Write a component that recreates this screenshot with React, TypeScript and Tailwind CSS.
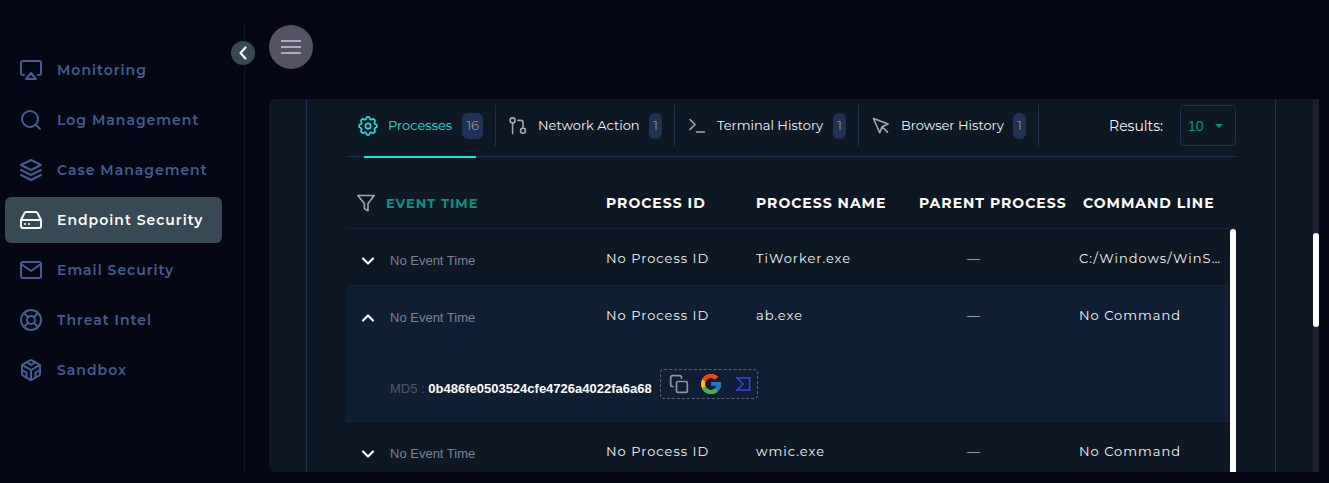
import { useState, type ReactNode } from "react";
import {
  FiAirplay, FiSearch, FiLayers, FiHardDrive, FiMail, FiLifeBuoy, FiCodesandbox, FiCopy,
} from "react-icons/fi";
import { FcGoogle } from "react-icons/fc";
import { ChevronDown, ChevronUp } from "lucide-react";

const strokeProps = {
  fill: "none",
  stroke: "currentColor",
  strokeLinecap: "round" as const,
  strokeLinejoin: "round" as const,
};

function GearIcon() {
  return (
    <svg width="20" height="20" viewBox="0 0 20 20" strokeWidth="1.7" {...strokeProps}>
      <path d="M8.1 2.6 C8.5 .4 11.5 .4 11.9 2.6 C12.1 3.5 12.9 3.9 13.8 3.4 C15.7 2.1 17.9 4.3 16.6 6.2 C16.1 7.1 16.5 7.9 17.4 8.1 C19.6 8.5 19.6 11.5 17.4 11.9 C16.5 12.1 16.1 12.9 16.6 13.8 C17.9 15.7 15.7 17.9 13.8 16.6 C12.9 16.1 12.1 16.5 11.9 17.4 C11.5 19.6 8.5 19.6 8.1 17.4 C7.9 16.5 7.1 16.1 6.2 16.6 C4.3 17.9 2.1 15.7 3.4 13.8 C3.9 12.9 3.5 12.1 2.6 11.9 C.4 11.5 .4 8.5 2.6 8.1 C3.5 7.9 3.9 7.1 3.4 6.2 C2.1 4.3 4.3 2.1 6.2 3.4 C7.1 3.9 7.9 3.5 8.1 2.6 Z" />
      <circle cx="10" cy="10" r="2.7" />
    </svg>
  );
}

function BranchIcon() {
  return (
    <svg width="20" height="20" viewBox="0 0 20 20" strokeWidth="1.6" {...strokeProps}>
      <circle cx="4.6" cy="4.4" r="2.5" />
      <path d="M4.6 7v10.5M10 4.4h3a2 2 0 0 1 2 2v5.8" />
      <circle cx="15" cy="14.8" r="2.5" />
    </svg>
  );
}

function TerminalIcon() {
  return (
    <svg width="20" height="20" viewBox="0 0 20 20" strokeWidth="1.6" {...strokeProps}>
      <path d="M3 3.5l5 5-5 5M9.5 16h8" />
    </svg>
  );
}

function PointerIcon() {
  return (
    <svg width="20" height="20" viewBox="0 0 20 20" strokeWidth="1.6" {...strokeProps}>
      <path d="M2.5 2.5l14.6 5.6-6 2.6-2.4 6zM11.1 10.7l5.4 5.4" />
    </svg>
  );
}

function FunnelIcon() {
  return (
    <svg width="20" height="20" viewBox="0 0 20 20" strokeWidth="1.6" {...strokeProps}>
      <path d="M1.8 2.5h16.4L12 10.4v7.4l-3.6-2.2v-5.2z" />
    </svg>
  );
}

function VirusTotalIcon() {
  return (
    <svg width="16" height="16" viewBox="0 0 16 16" fill="none" stroke="currentColor" strokeWidth="1.7">
      <path d="M2 1.8h12.6v12.4H2L8 8z" />
    </svg>
  );
}

const navItems = [
  { label: "Monitoring", Icon: FiAirplay },
  { label: "Log Management", Icon: FiSearch },
  { label: "Case Management", Icon: FiLayers },
  { label: "Endpoint Security", Icon: FiHardDrive, active: true },
  { label: "Email Security", Icon: FiMail },
  { label: "Threat Intel", Icon: FiLifeBuoy },
  { label: "Sandbox", Icon: FiCodesandbox },
];

function Sidebar() {
  return (
    <aside className="relative mt-[25px] mb-[11px] w-[245px] shrink-0 border-r border-[#0f1a26] pt-[22px] pr-[22px] pl-[5px]">
      <nav className="flex flex-col gap-1">
        {navItems.map(({ label, Icon, active }) => (
          <a
            key={label}
            href="#"
            className={`flex h-[46px] items-center gap-3.5 rounded-md px-3.5 text-sm font-semibold tracking-[1px] whitespace-nowrap ${
              active ? "bg-[#374955] text-white" : "text-[#465d91]"
            }`}
          >
            <Icon size={24} className="shrink-0" />
            {label}
          </a>
        ))}
      </nav>
      <button
        aria-label="Collapse sidebar"
        className="absolute top-4 -right-[11px] flex size-6 items-center justify-center rounded-full bg-[#374955] text-white"
      >
        <svg width="10" height="16" viewBox="0 0 10 16" strokeWidth="2.2" {...strokeProps}>
          <path d="M7.5 2.5L2.5 8l5 5.5" />
        </svg>
      </button>
    </aside>
  );
}

const tabs: { label: string; count: number; icon: ReactNode; width: string }[] = [
  { label: "Processes", count: 16, icon: <GearIcon />, width: "w-[150px]" },
  { label: "Network Action", count: 1, icon: <BranchIcon />, width: "w-[179px]" },
  { label: "Terminal History", count: 1, icon: <TerminalIcon />, width: "w-[184px]" },
  { label: "Browser History", count: 1, icon: <PointerIcon />, width: "w-[180px]" },
];

function TabBar() {
  return (
    <div className="relative flex justify-between border-b border-[#1d3050] pt-1.5 pb-2.5">
      <div role="tablist" className="flex">
        {tabs.map((tab, i) => (
          <button
            key={tab.label}
            role="tab"
            aria-selected={i === 0}
            className={`flex h-[41px] items-center border-r border-[#1d3050] px-3 text-[13px] whitespace-nowrap ${tab.width} ${
              i === 0 ? "text-[#1ae5d8]" : "text-[#f4f5f7]"
            }`}
          >
            <span className={`mr-2.5 shrink-0 ${i === 0 ? "" : "text-[#a3a8ba]"}`}>{tab.icon}</span>
            {tab.label}
            <span className="ml-auto flex h-[26px] items-center rounded-md bg-[#203355] px-1 text-[#8d919b]">
              {tab.count}
            </span>
          </button>
        ))}
      </div>
      <div className="flex items-center gap-[17px] text-sm text-[#f4f5f7]">
        <label htmlFor="results">Results:</label>
        <div className="relative">
          <select
            id="results"
            className="h-[41px] w-14 appearance-none rounded border border-[#1d3050] bg-transparent pl-[7px] font-['Liberation_Sans',sans-serif] text-sm text-[#0b9384]"
          >
            <option>10</option>
            <option>25</option>
          </select>
          <span className="pointer-events-none absolute top-[19px] right-[13px] border-x-4 border-t-4 border-x-transparent border-t-[#0b9384]" />
        </div>
      </div>
      <span className="absolute -bottom-0.5 left-[18px] h-0.5 w-28 bg-[#12e8dc]" />
    </div>
  );
}

const rows = [
  { name: "TiWorker.exe", command: "C:/Windows/WinS…" },
  { name: "ab.exe", command: "No Command", md5: "0b486fe0503524cfe4726a4022fa6a68" },
  { name: "wmic.exe", command: "No Command" },
];

function ProcessTable() {
  const [open, setOpen] = useState(1);
  return (
    <div className="relative min-h-0 flex-1 overflow-hidden">
      <table className="w-full table-fixed border-collapse text-left">
        <colgroup>
          <col className="w-[260px]" />
          <col className="w-[150px]" />
          <col className="w-[163px]" />
          <col className="w-[160px]" />
          <col />
        </colgroup>
        <thead>
          <tr className="h-[71px] border-b border-[#171f3d] text-sm font-bold tracking-[1px] whitespace-nowrap text-white">
            <th className="pt-[22px] pl-2.5 text-[13px] text-[#0b9384]">
              <span className="flex items-center gap-2.5">
                <span className="text-[#a3a8ba]"><FunnelIcon /></span>
                EVENT TIME
              </span>
            </th>
            <th className="pt-[22px]">PROCESS ID</th>
            <th className="pt-[22px]">PROCESS NAME</th>
            <th className="pt-[22px]">PARENT PROCESS</th>
            <th className="pt-[22px] pl-1">COMMAND LINE</th>
          </tr>
        </thead>
        {rows.map((row, i) => {
          const expanded = open === i && row.md5;
          const Chevron = expanded ? ChevronUp : ChevronDown;
          return (
            <tbody key={row.name} className={`border-b border-[#171f3d] ${expanded ? "bg-[#101e33]" : ""}`}>
              <tr className="h-[57px] text-[13px] tracking-[1px] whitespace-nowrap text-[#f4f5f7]">
                <td className="pt-2 pl-3 font-['Liberation_Sans',sans-serif] tracking-normal text-[#7b8199]">
                  <span className="flex items-center gap-3">
                    <button
                      aria-label={expanded ? "Collapse row" : "Expand row"}
                      onClick={() => setOpen(expanded ? -1 : i)}
                      className="flex w-5 justify-center text-white"
                    >
                      <Chevron size={20} strokeWidth={2.6} />
                    </button>
                    No Event Time
                  </span>
                </td>
                <td className="pt-1">No Process ID</td>
                <td className="pt-1">{row.name}</td>
                <td className="pt-1 pl-12">—</td>
                <td className="pt-1">{row.command}</td>
              </tr>
              {expanded && (
                <tr className="h-[79px] font-['Liberation_Sans',sans-serif] text-[13px]">
                  <td colSpan={5} className="pt-1.5 pl-11">
                    <div className="flex items-center gap-2">
                      <span className="pt-2 text-[#4d586e]">
                        MD5 : <span className="font-bold text-white">{row.md5}</span>
                      </span>
                      <span className="flex h-[30px] items-center gap-2.5 rounded border border-dashed border-[#59646f] pr-1 pl-2">
                        <button aria-label="Copy hash" className="text-[#8f94a8]">
                          <FiCopy size={20} />
                        </button>
                        <button aria-label="Search on Google"><FcGoogle size={24} /></button>
                        <button aria-label="Look up on VirusTotal" className="flex w-5 justify-center text-[#3040d8]">
                          <VirusTotalIcon />
                        </button>
                      </span>
                    </div>
                  </td>
                </tr>
              )}
            </tbody>
          );
        })}
      </table>
      <div className="absolute top-[72px] right-0 bottom-0 w-1.5 rounded-t-full bg-white" />
    </div>
  );
}

export default function App() {
  return (
    <div className="flex h-screen overflow-hidden bg-[#050714] font-['Montserrat','Inter',sans-serif]">
      <Sidebar />
      <main className="flex min-w-0 flex-1 flex-col gap-[30px] pt-[25px] pr-2.5 pb-[11px] pl-6">
        <button
          aria-label="Open menu"
          className="flex size-11 shrink-0 items-center justify-center rounded-full bg-[#535363] text-[#a9acc0]"
        >
          <svg width="20" height="16" viewBox="0 0 20 16" fill="none" stroke="currentColor" strokeWidth="2">
            <path d="M0 2h20M0 8h20M0 14h20" />
          </svg>
        </button>
        <section className="flex min-h-0 flex-1 overflow-hidden rounded-l-md bg-[#0e1724]">
          <div className="flex min-w-0 flex-1 px-[37px]">
            <div className="flex min-w-0 flex-1 flex-col border-x border-[#1d3050] px-[39px]">
              <TabBar />
              <ProcessTable />
            </div>
          </div>
          <div className="w-1.5 bg-[#1f1d2e] pt-[134px]">
            <div className="h-[94px] rounded-full bg-white" />
          </div>
        </section>
      </main>
    </div>
  );
}
